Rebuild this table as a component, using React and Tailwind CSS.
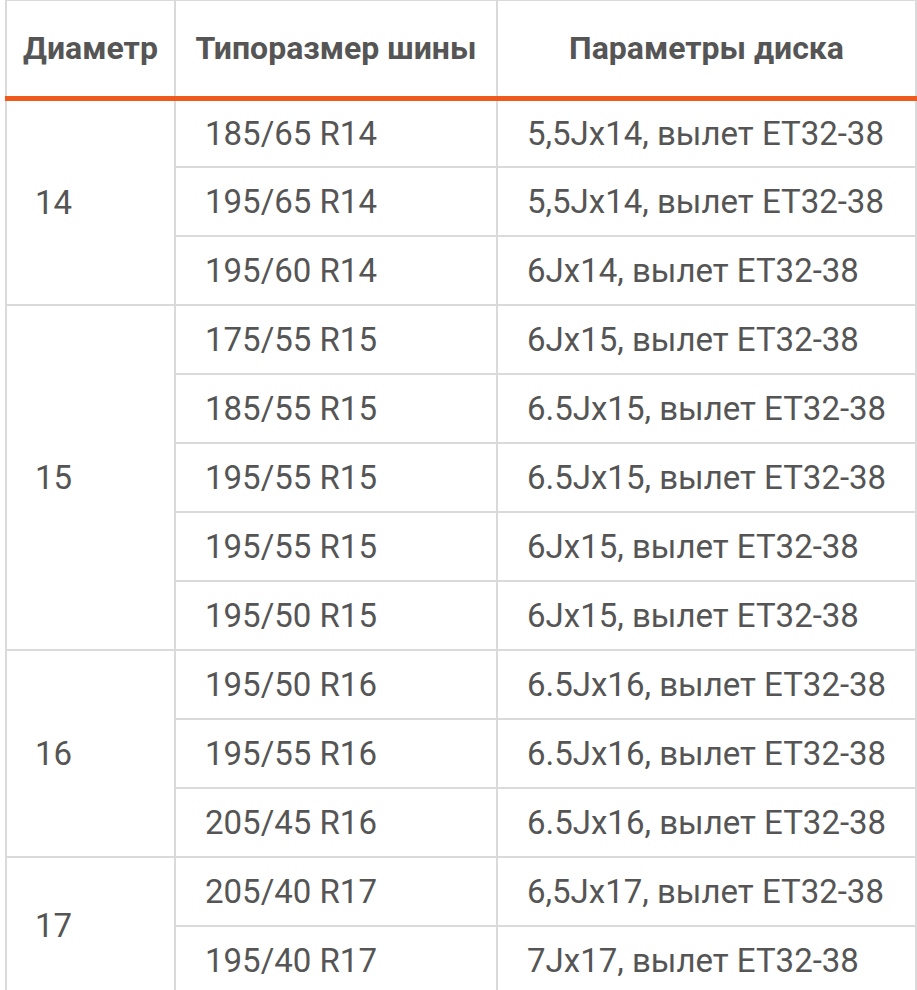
import React from "react";

const groups = [
  {
    d: "14",
    rows: [
      ["185/65 R14", "5,5Jx14, вылет ET32-38"],
      ["195/65 R14", "5,5Jx14, вылет ET32-38"],
      ["195/60 R14", "6Jx14, вылет ET32-38"],
    ],
  },
  {
    d: "15",
    rows: [
      ["175/55 R15", "6Jx15, вылет ET32-38"],
      ["185/55 R15", "6.5Jx15, вылет ET32-38"],
      ["195/55 R15", "6.5Jx15, вылет ET32-38"],
      ["195/55 R15", "6Jx15, вылет ET32-38"],
      ["195/50 R15", "6Jx15, вылет ET32-38"],
    ],
  },
  {
    d: "16",
    rows: [
      ["195/50 R16", "6.5Jx16, вылет ET32-38"],
      ["195/55 R16", "6.5Jx16, вылет ET32-38"],
      ["205/45 R16", "6.5Jx16, вылет ET32-38"],
    ],
  },
  {
    d: "17",
    rows: [
      ["205/40 R17", "6,5Jx17, вылет ET32-38"],
      ["195/40 R17", "7Jx17, вылет ET32-38"],
    ],
  },
];

const cell = "border-2 border-[#dadada] pl-[29px] pr-0 h-[69px] align-middle text-left whitespace-nowrap";
const head = "border-2 border-[#dadada] border-b-[5px] border-b-[#ef5a1c] text-[32px] font-bold text-center align-middle whitespace-nowrap";

export default function App() {
  return (
    <div className="w-[917px] h-[990px] overflow-hidden bg-white pl-[5px] pr-[2px]" style={{ fontFamily: "Roboto, 'Liberation Sans', sans-serif" }}>
      <table className="w-[910px] table-fixed border-collapse text-[33px] text-[#555555] -mt-[1px]">
        <colgroup>
          <col className="w-[169px]" />
          <col className="w-[322px]" />
          <col className="w-[419px]" />
        </colgroup>
        <thead>
          <tr className="h-[98px]">
            <th className={head}>Диаметр</th>
            <th className={head}>Типоразмер шины</th>
            <th className={head}>Параметры диска</th>
          </tr>
        </thead>
        <tbody>
          {groups.map((g) =>
            g.rows.map((r, i) => (
              <tr key={g.d + i}>
                {i === 0 && (
                  <td rowSpan={g.rows.length} className="border-2 border-[#dadada] px-[28px] align-middle">
                    {g.d}
                  </td>
                )}
                <td className={cell}>{r[0]}</td>
                <td className={cell}>{r[1]}</td>
              </tr>
            ))
          )}
        </tbody>
      </table>
    </div>
  );
}
